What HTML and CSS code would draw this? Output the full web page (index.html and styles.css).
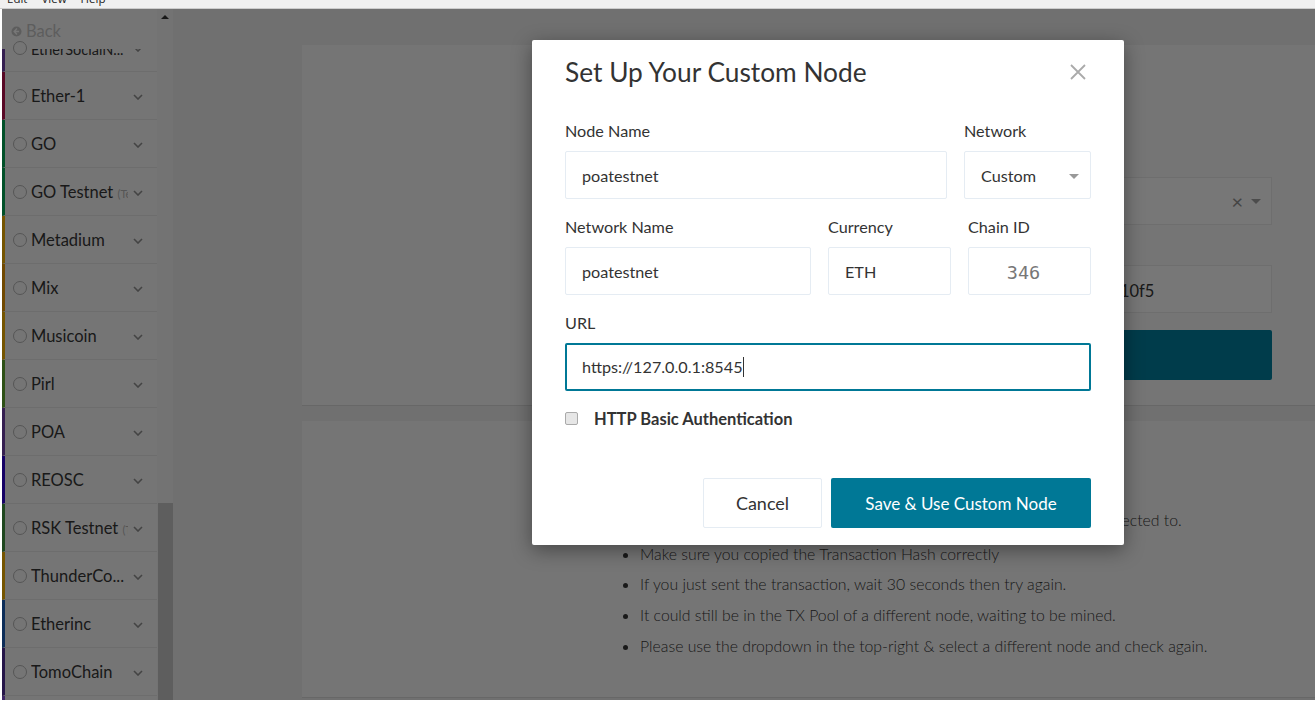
FILE: index.html
```html
<!DOCTYPE html>
<html lang="en">
<head>
    <meta charset="UTF-8">
    <meta name="viewport" content="width=device-width, initial-scale=1.0">
    <title>Set Up Your Custom Node</title>
    <link rel="stylesheet" href="styles.css">
</head>
<body>
    <div class="menubar">
        <span>Edit</span>
        <span>View</span>
        <span>Help</span>
    </div>

    <div class="app">
        <aside class="sidebar">
            <div class="back">
                <svg class="back-icon" viewBox="0 0 12 12"><circle cx="6" cy="6" r="5.5" fill="#bbb"/><path d="M6.5 2.8 3.5 6l3 3.2M3.8 6h5" fill="none" stroke="#eee" stroke-width="1.6"/></svg>
                <span>Back</span>
            </div>
            <ul class="networks">
                <li class="network stripe-purple"><i class="radio"></i><span class="name name-tight">EtherSocialN...</span><svg class="chevron" viewBox="0 0 10 6"><path d="M1 1l4 4 4-4"/></svg></li>
                <li class="network stripe-maroon"><i class="radio"></i><span class="name">Ether-1</span><svg class="chevron" viewBox="0 0 10 6"><path d="M1 1l4 4 4-4"/></svg></li>
                <li class="network stripe-green"><i class="radio"></i><span class="name">GO</span><svg class="chevron" viewBox="0 0 10 6"><path d="M1 1l4 4 4-4"/></svg></li>
                <li class="network stripe-green"><i class="radio"></i><span class="name">GO Testnet <small>(Testnet)</small></span><svg class="chevron" viewBox="0 0 10 6"><path d="M1 1l4 4 4-4"/></svg></li>
                <li class="network stripe-amber"><i class="radio"></i><span class="name">Metadium</span><svg class="chevron" viewBox="0 0 10 6"><path d="M1 1l4 4 4-4"/></svg></li>
                <li class="network stripe-orange"><i class="radio"></i><span class="name">Mix</span><svg class="chevron" viewBox="0 0 10 6"><path d="M1 1l4 4 4-4"/></svg></li>
                <li class="network stripe-amber"><i class="radio"></i><span class="name">Musicoin</span><svg class="chevron" viewBox="0 0 10 6"><path d="M1 1l4 4 4-4"/></svg></li>
                <li class="network stripe-lime"><i class="radio"></i><span class="name">Pirl</span><svg class="chevron" viewBox="0 0 10 6"><path d="M1 1l4 4 4-4"/></svg></li>
                <li class="network stripe-purple"><i class="radio"></i><span class="name">POA</span><svg class="chevron" viewBox="0 0 10 6"><path d="M1 1l4 4 4-4"/></svg></li>
                <li class="network stripe-indigo"><i class="radio"></i><span class="name">REOSC</span><svg class="chevron" viewBox="0 0 10 6"><path d="M1 1l4 4 4-4"/></svg></li>
                <li class="network stripe-moss"><i class="radio"></i><span class="name">RSK Testnet <small>(Testnet)</small></span><svg class="chevron" viewBox="0 0 10 6"><path d="M1 1l4 4 4-4"/></svg></li>
                <li class="network stripe-amber"><i class="radio"></i><span class="name">ThunderCo...</span><svg class="chevron" viewBox="0 0 10 6"><path d="M1 1l4 4 4-4"/></svg></li>
                <li class="network stripe-blue"><i class="radio"></i><span class="name">Etherinc</span><svg class="chevron" viewBox="0 0 10 6"><path d="M1 1l4 4 4-4"/></svg></li>
                <li class="network stripe-violet"><i class="radio"></i><span class="name">TomoChain</span><svg class="chevron" viewBox="0 0 10 6"><path d="M1 1l4 4 4-4"/></svg></li>
                <li class="network stripe-lilac"></li>
            </ul>
        </aside>

        <div class="scrollbar">
            <span class="scroll-up"></span>
            <span class="scroll-thumb"></span>
        </div>

        <main class="main">
            <section class="card card-check">
                <div class="box box-select"><span class="box-clear">×</span><span class="caret-down"></span></div>
                <div class="box box-hash">0x3f9a10f5</div>
                <div class="check-btn"></div>
            </section>
            <section class="card card-help">
                <ul class="help-list">
                    <li>Your transaction could not be located on the network you are now connected to.</li>
                    <li>Make sure you copied the Transaction Hash correctly</li>
                    <li>If you just sent the transaction, wait 30 seconds then try again.</li>
                    <li>It could still be in the TX Pool of a different node, waiting to be mined.</li>
                    <li>Please use the dropdown in the top-right &amp; select a different node and check again.</li>
                </ul>
            </section>
        </main>

        <div class="overlay">
            <div class="modal">
                <div class="modal-head">
                    <h2>Set Up Your Custom Node</h2>
                    <svg class="close" viewBox="0 0 16 16"><path d="M1 1l14 14M15 1 1 15"/></svg>
                </div>

                <div class="row row-name">
                    <div>
                        <label>Node Name</label>
                        <div class="field">poatestnet</div>
                    </div>
                    <div>
                        <label>Network</label>
                        <div class="field field-select">Custom<span class="caret-down"></span></div>
                    </div>
                </div>

                <div class="row row-network">
                    <div>
                        <label>Network Name</label>
                        <div class="field">poatestnet</div>
                    </div>
                    <div>
                        <label>Currency</label>
                        <div class="field">ETH</div>
                    </div>
                    <div>
                        <label>Chain ID</label>
                        <div class="field field-chain">346</div>
                    </div>
                </div>

                <div class="row">
                    <div>
                        <label>URL</label>
                        <div class="field field-active">https://127.0.0.1:8545<span class="text-caret"></span></div>
                    </div>
                </div>

                <div class="auth">
                    <input type="checkbox" id="basicAuth">
                    <label for="basicAuth">HTTP Basic Authentication</label>
                </div>

                <div class="actions">
                    <button type="button" class="btn-cancel">Cancel</button>
                    <button type="button" class="btn-save">Save &amp; Use Custom Node</button>
                </div>
            </div>
        </div>
    </div>
</body>
</html>
```

FILE: styles.css
```css
* { box-sizing: border-box; }
body { margin: 0; height: 707px; overflow: hidden; background: #fff; font-family: Lato, "Open Sans", sans-serif; color: #333; font-size: 16px; }

.menubar { height: 9px; overflow: hidden; background: #f0f0f0; border-bottom: 1px solid #ccc; display: flex; gap: 14px; padding-left: 7px; font-family: "Open Sans", sans-serif; font-size: 11.5px; line-height: 9px; color: #222; }
.menubar span { margin-top: -6px; }

.app { position: relative; height: 691px; margin-left: 2px; display: flex; overflow: hidden; background: #e0e0e0; }

/* sidebar */
.sidebar { position: relative; width: 155px; flex: none; overflow: hidden; background: #ebebeb; }
.back { position: absolute; top: 0; left: 0; right: 0; height: 40px; z-index: 1; background: #ebebeb; display: flex; align-items: flex-end; gap: 4px; padding: 0 0 8px 9px; font-size: 16.5px; line-height: 20px; color: #bbb; }
.back-icon { width: 11px; height: 11px; margin-bottom: 4px; }
.networks { list-style: none; margin: 15px 0 0; padding: 0; }
.network { height: 48px; display: flex; align-items: center; border-bottom: 1px solid #dadada; border-left: 3px solid #999; padding-left: 8px; }
.radio { position: relative; z-index: 2; width: 14px; height: 14px; margin-right: 4px; border: 1px solid #aaa; border-radius: 50%; flex: none; }
.name { width: 97px; white-space: nowrap; overflow: hidden; font-size: 16.5px; }
.name-tight { font-size: 14.5px; line-height: 24px; padding-top: 4px; }
.name small { font-size: 11px; color: #aaa; }
.chevron { width: 10px; height: 6px; margin: 2px 0 0 5px; flex: none; fill: none; stroke: #888; stroke-width: 1.6; }
.stripe-purple { border-left-color: #6a3fa0; }
.stripe-maroon { border-left-color: #b0104a; }
.stripe-green { border-left-color: #00a050; }
.stripe-amber { border-left-color: #e8a800; }
.stripe-orange { border-left-color: #e09000; }
.stripe-lime { border-left-color: #5aa02c; }
.stripe-indigo { border-left-color: #2a00c8; }
.stripe-moss { border-left-color: #3f8f3f; }
.stripe-blue { border-left-color: #1a5ab0; }
.stripe-violet { border-left-color: #4a2a90; }
.stripe-lilac { border-left-color: #7a4ac8; }

/* scrollbar */
.scrollbar { width: 16px; flex: none; margin-right: 2px; background: #e6e6e6; display: flex; flex-direction: column; align-items: center; }
.scroll-up { margin-top: 6px; border-left: 4px solid transparent; border-right: 4px solid transparent; border-bottom: 4px solid #333; }
.scroll-thumb { width: 15px; margin-top: auto; height: 197px; background: #bcbcbc; }

/* page behind the dialog */
.main { flex: 1; padding: 36px 0 0 127px; display: flex; flex-direction: column; gap: 15px; }
.card { background: #ebebeb; border-bottom: 1px solid #cfcfcf; }
.card-check { height: 361px; padding: 132px 43px 0 298px; }
.box { height: 48px; background: #eee; border: 1px solid #dcdcdc; display: flex; align-items: center; justify-content: flex-end; padding: 0 10px; }
.box-clear { font-size: 20px; line-height: 20px; color: #888; margin-right: 8px; }
.caret-down { border-left: 5px solid transparent; border-right: 5px solid transparent; border-top: 5px solid #999; }
.box-hash { margin-top: 40px; justify-content: flex-start; padding: 3px 0 0 468px; font-size: 16.5px; color: #333; }
.check-btn { height: 50px; margin-top: 17px; background: #007896; border-radius: 2px; }
.card-help { height: 277px; padding: 84px 0 0 298px; }
.help-list { margin: 0; padding-left: 40px; font-weight: 300; font-size: 15.8px; line-height: 30.7px; color: #333; }
.help-list li:first-child { margin: 0 0 3px -7px; }

/* dialog */
.overlay { position: absolute; top: 0; left: 0; right: 0; bottom: 0; background: rgba(0, 0, 0, .5); z-index: 5; }
.modal { width: 592px; margin: 31px 0 0 530px; padding: 16px 33px 17px 33px; background: #fff; border-radius: 2px; box-shadow: 0 5px 20px rgba(0, 0, 0, .4); font-size: 16.2px; }
.modal-head { height: 32px; display: flex; align-items: center; justify-content: space-between; margin-bottom: 31px; }
.modal-head h2 { margin: 0; font-size: 26.3px; font-weight: 400; line-height: 32px; }
.close { width: 16px; height: 16px; margin-right: 5px; fill: none; stroke: #aaa; stroke-width: 1.8; }

.row { display: grid; gap: 17px; margin-bottom: 16px; }
.row-name { grid-template-columns: 382px 127px; }
.row-network { grid-template-columns: 246px 123px 123px; }
.row label { display: block; line-height: 24px; margin-bottom: 8px; }
.field { height: 48px; border: 1px solid #e5ecf3; border-radius: 2px; padding: 2px 0 0 16px; display: flex; align-items: center; line-height: 24px; }
.field-select { justify-content: space-between; padding-right: 11px; }
.field-chain { justify-content: center; padding: 3px 12px 0 0; font-family: "DejaVu Sans Mono", monospace; font-size: 18.5px; color: #777; }
.field-active { border: 2px solid #007896; padding-left: 15px; padding-top: 0; }
.text-caret { width: 1px; height: 20px; background: #333; }

.auth { display: flex; align-items: center; height: 24px; margin-top: -1px; }
.auth input { appearance: none; width: 13px; height: 13px; margin: 0 16px 0 0; background: #e6e6e6; border: 1px solid #aaa; border-radius: 2px; }
.auth label { font-weight: 700; font-size: 16.5px; margin-top: 2px; }

.actions { display: flex; justify-content: flex-end; gap: 9px; margin-top: 48px; }
.actions button { height: 50px; border-radius: 2px; font-family: inherit; cursor: pointer; }
.btn-cancel { width: 119px; background: #fff; border: 1px solid #e5ecf3; color: #333; font-size: 18px; }
.btn-save { width: 260px; background: #007896; border: none; color: #fff; font-size: 17px; }
```
